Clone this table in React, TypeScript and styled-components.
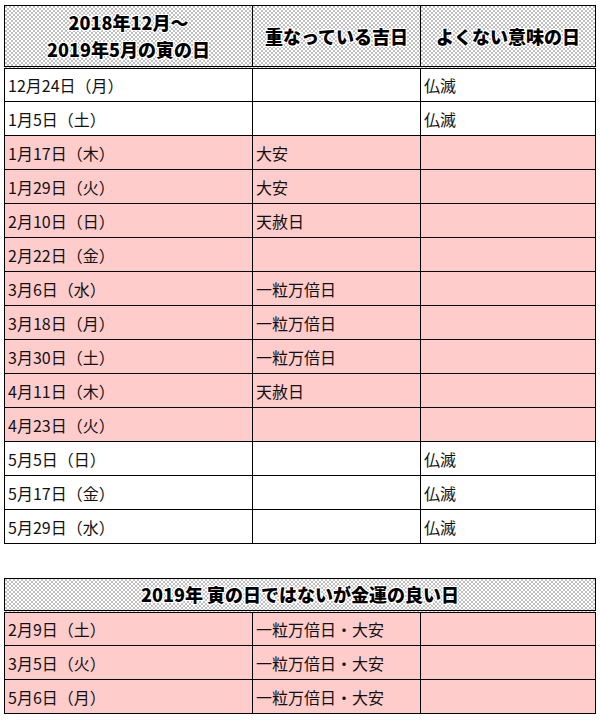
import React from 'react';
import styled, { createGlobalStyle } from 'styled-components';

interface DayRow {
  date: string;
  lucky: string;
  unlucky: string;
  pink: boolean;
}

const TORA_DAYS: DayRow[] = [
  { date: '12月24日（月）', lucky: '', unlucky: '仏滅', pink: false },
  { date: '1月5日（土）', lucky: '', unlucky: '仏滅', pink: false },
  { date: '1月17日（木）', lucky: '大安', unlucky: '', pink: true },
  { date: '1月29日（火）', lucky: '大安', unlucky: '', pink: true },
  { date: '2月10日（日）', lucky: '天赦日', unlucky: '', pink: true },
  { date: '2月22日（金）', lucky: '', unlucky: '', pink: true },
  { date: '3月6日（水）', lucky: '一粒万倍日', unlucky: '', pink: true },
  { date: '3月18日（月）', lucky: '一粒万倍日', unlucky: '', pink: true },
  { date: '3月30日（土）', lucky: '一粒万倍日', unlucky: '', pink: true },
  { date: '4月11日（木）', lucky: '天赦日', unlucky: '', pink: true },
  { date: '4月23日（火）', lucky: '', unlucky: '', pink: true },
  { date: '5月5日（日）', lucky: '', unlucky: '仏滅', pink: false },
  { date: '5月17日（金）', lucky: '', unlucky: '仏滅', pink: false },
  { date: '5月29日（水）', lucky: '', unlucky: '仏滅', pink: false },
];

const OTHER_DAYS: DayRow[] = [
  { date: '2月9日（土）', lucky: '一粒万倍日・大安', unlucky: '', pink: true },
  { date: '3月5日（火）', lucky: '一粒万倍日・大安', unlucky: '', pink: true },
  { date: '5月6日（月）', lucky: '一粒万倍日・大安', unlucky: '', pink: true },
];

const GlobalStyle = createGlobalStyle`
  html, body {
    margin: 0;
    padding: 0;
    background: #fff;
  }
  body {
    font-family: "Noto Sans CJK JP", "Noto Sans", sans-serif;
    color: #111;
  }
`;

const Page = styled.div`
  padding: 5px 0 0 4px;
  width: 591px;
`;

const Table = styled.table<{ $gap?: boolean }>`
  border-collapse: collapse;
  table-layout: fixed;
  width: 591px;
  margin-top: ${p => (p.$gap ? '34px' : '0')};
`;

const HeadCell = styled.th<{ $height: number; $double?: boolean }>`
  height: ${p => p.$height}px;
  padding: 0;
  border: 1px solid #000;
  border-bottom: ${p => (p.$double ? '3px double #000' : '1px solid #000')};
  background-color: #fff;
  background-image:
    conic-gradient(from 270deg at 1px 1px, #000 25%, transparent 0),
    conic-gradient(from 270deg at 1px 1px, #000 25%, transparent 0);
  background-size: 4px 4px, 4px 4px;
  background-position: 0 0, 2px 2px;
  font-size: 18px;
  font-weight: 900;
  line-height: 27px;
  text-align: center;
  vertical-align: middle;
  color: #000;
  text-shadow:
    1px 0 #fff, -1px 0 #fff, 0 1px #fff, 0 -1px #fff,
    1px 1px #fff, -1px -1px #fff, 1px -1px #fff, -1px 1px #fff;
`;

const Row = styled.tr<{ $pink: boolean }>`
  height: 34px;
  background: ${p => (p.$pink ? '#ffcccc' : '#fff')};
`;

const Cell = styled.td`
  padding: 0 0 0 3px;
  border: 1px solid #000;
  font-size: 16px;
  line-height: 20px;
  vertical-align: middle;
  white-space: nowrap;
`;

const Cols = () => (
  <colgroup>
    <col style={{ width: 248 }} />
    <col style={{ width: 168 }} />
    <col style={{ width: 175 }} />
  </colgroup>
);

const Rows = ({ rows }: { rows: DayRow[] }) => (
  <tbody>
    {rows.map(r => (
      <Row key={r.date} $pink={r.pink}>
        <Cell>{r.date}</Cell>
        <Cell>{r.lucky}</Cell>
        <Cell>{r.unlucky}</Cell>
      </Row>
    ))}
  </tbody>
);

const App: React.FC = () => (
  <>
    <GlobalStyle />
    <Page>
      <Table>
        <Cols />
        <thead>
          <tr>
            <HeadCell $height={60} $double>
              2018年12月～<br />2019年5月の寅の日
            </HeadCell>
            <HeadCell $height={60} $double>重なっている吉日</HeadCell>
            <HeadCell $height={60} $double>よくない意味の日</HeadCell>
          </tr>
        </thead>
        <Rows rows={TORA_DAYS} />
      </Table>

      <Table $gap>
        <Cols />
        <thead>
          <tr>
            <HeadCell $height={31} $double colSpan={3}>
              2019年 寅の日ではないが金運の良い日
            </HeadCell>
          </tr>
        </thead>
        <Rows rows={OTHER_DAYS} />
      </Table>
    </Page>
  </>
);

export default App;
